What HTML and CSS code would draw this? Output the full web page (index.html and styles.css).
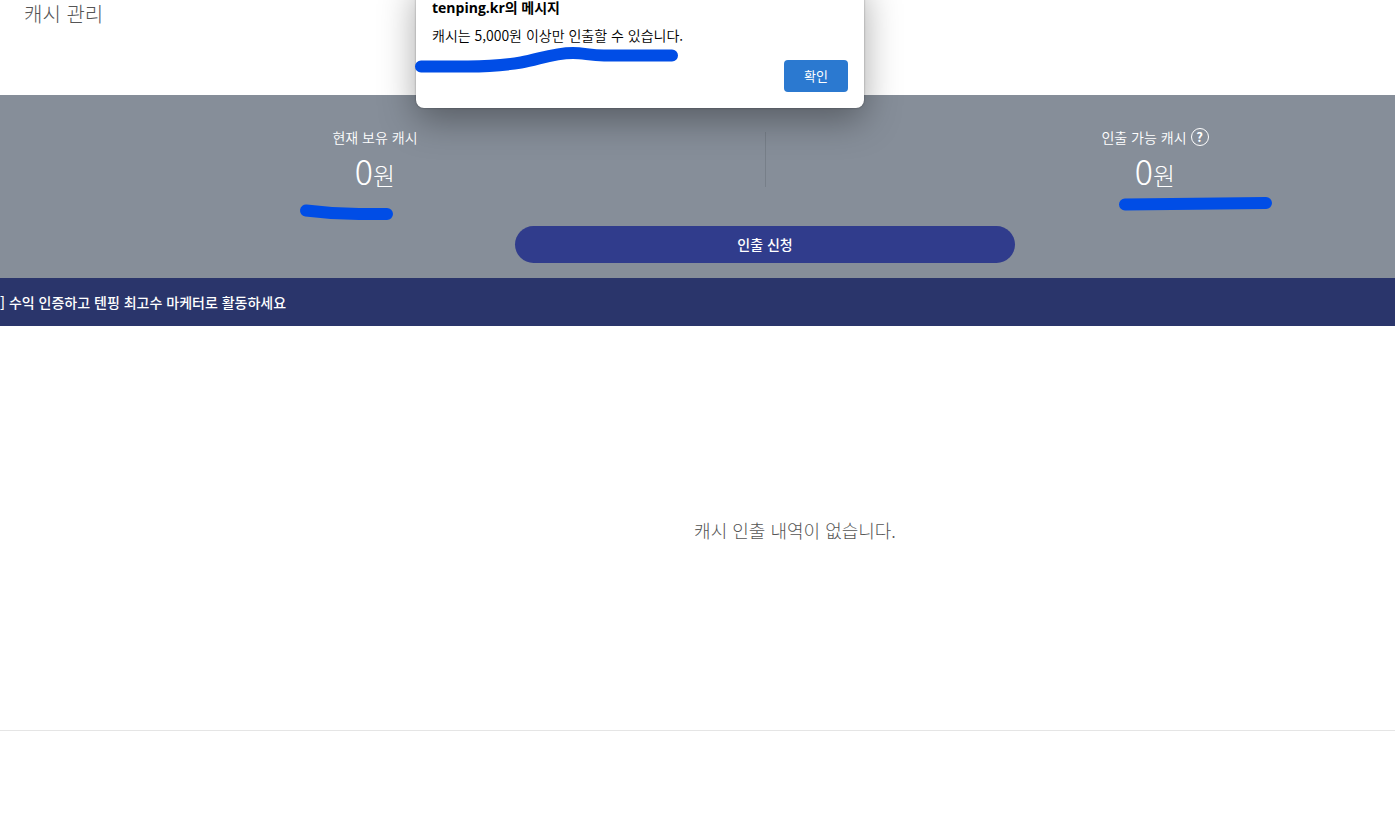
FILE: index.html
```html
<!DOCTYPE html>
<html lang="ko">
<head>
  <meta charset="UTF-8" />
  <title>캐시 관리</title>
  <link rel="stylesheet" href="styles.css">
</head>
<body>
  <header class="page-header">
    <h1>캐시 관리</h1>
  </header>

  <main>
    <section class="summary">
      <div class="summary-inner">
        <div class="balances">
          <div class="balance">
            <p class="balance-label">현재 보유 캐시</p>
            <p class="balance-value">0<span>원</span></p>
          </div>
          <div class="balance">
            <p class="balance-label">인출 가능 캐시 <button type="button" class="help" aria-label="도움말">?</button></p>
            <p class="balance-value">0<span>원</span></p>
          </div>
        </div>
        <button type="button" class="withdraw">인출 신청</button>
      </div>
    </section>

    <a href="#" class="notice"><span>] 수익 인증하고 텐핑 최고수 마케터로 활동하세요</span></a>

    <section class="history">
      <p>캐시 인출 내역이 없습니다.</p>
    </section>
  </main>

  <!-- 알림창 -->
  <div class="dialog" role="alertdialog" aria-labelledby="dialogTitle" aria-describedby="dialogText">
    <h2 id="dialogTitle">tenping.kr의 메시지</h2>
    <p id="dialogText">캐시는 5,000원 이상만 인출할 수 있습니다.</p>
    <div class="dialog-actions">
      <button type="button">확인</button>
    </div>
  </div>

  <!-- 펜 표시 -->
  <svg class="marker" width="1395" height="240" viewBox="0 0 1395 240" aria-hidden="true">
    <path d="M421 66.500H468C487 66.500 503 65.500 521 62.500C540 59 553 53 573 53C584 53 590 55.500 604 55.500H672" />
    <path d="M306 210.500C325 213 341 214 359 214H387" />
    <path d="M1125 204.500L1266 203" />
  </svg>
</body>
</html>
```

FILE: styles.css
```css
*{margin:0;padding:0;box-sizing:border-box}
body{
  font-family:'Noto Sans CJK KR',sans-serif;
  font-size:14px;
  line-height:20px;
  color:#555;
  background-color:#fff;
  overflow-x:hidden;
}
button{font-family:inherit;font-size:14px;border:none;cursor:pointer}

.page-header{height:95px;padding:0 24px}
.page-header h1{font-size:20px;line-height:28px;font-weight:300}

/* ---------- Summary ---------- */
.summary{background-color:#868e99;color:#fff;overflow:hidden}
.summary-inner{margin:0 -150px 0 -15px;padding:32px 0 15px;text-align:center}
.balances{display:grid;grid-template-columns:1fr 1fr;margin-bottom:34px}
.balance + .balance{background:linear-gradient(#777f89,#777f89) left 5px / 1px 55px no-repeat}
.balance-label{display:flex;justify-content:center;align-items:center;gap:4px;height:20px;font-weight:350}
.balance-value{font-size:34px;line-height:48px;height:45px;font-weight:300}
.balance-value span{font-size:24px}
.help{width:18px;height:18px;border:1px solid #fff;border-radius:50%;background:none;color:#fff;font-size:13px;line-height:16px;font-weight:700}
.withdraw{width:500px;height:37px;padding-bottom:2px;border-radius:19px;background-color:#303c8c;color:#fff;font-weight:500}

.notice{display:flex;align-items:center;height:48px;background-color:#2a356b;color:#fff;font-weight:500;text-decoration:none}

.history{height:405px;border-bottom:1px solid #e5e5e5;display:flex;align-items:center;justify-content:center;padding:4px 0 0 195px}
.history p{font-size:18px;line-height:28px;font-weight:300}

/* ---------- Dialog ---------- */
.dialog{
  position:absolute;
  top:-20px;
  left:416px;
  width:448px;
  padding:16px;
  border-radius:0 0 8px 8px;
  background-color:#fff;
  color:#000;
  box-shadow:0 0 2px rgba(0,0,0,.4),0 12px 36px rgba(0,0,0,.35);
}
.dialog h2{font-family:'Open Sans','Noto Sans CJK KR',sans-serif;font-size:14px;line-height:24px;font-weight:700}
.dialog p{font-size:14px;line-height:24px;margin:3px 0 13px;font-weight:350}
.dialog-actions{display:flex;justify-content:flex-end}
.dialog-actions button{width:64px;height:32px;padding-bottom:2px;border-radius:4px;background-color:#2b79d0;color:#fff;font-size:13px}

/* ---------- Marker ---------- */
.marker{position:absolute;top:0;left:0;pointer-events:none}
.marker path{fill:none;stroke:#004de6;stroke-width:12;stroke-linecap:round}
```
